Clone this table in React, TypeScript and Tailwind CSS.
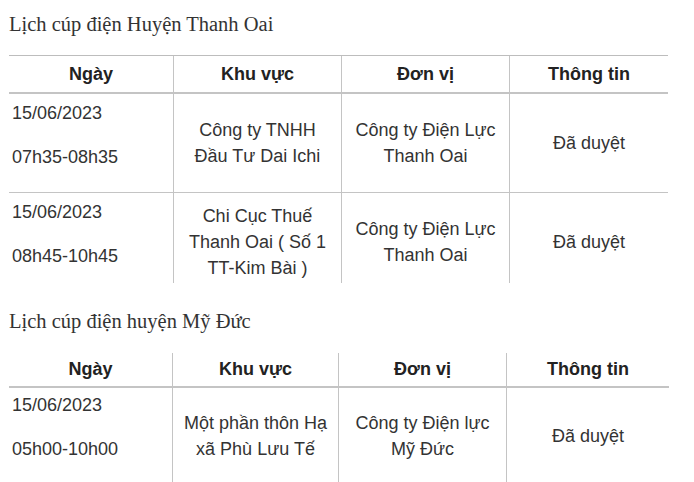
import React from "react";

type Row = {
  date: string;
  time: string;
  area: string[];
  unit: string[];
  info: string;
};

const thanhOai: Row[] = [
  {
    date: "15/06/2023",
    time: "07h35-08h35",
    area: ["Công ty TNHH", "Đầu Tư Dai Ichi"],
    unit: ["Công ty Điện Lực", "Thanh Oai"],
    info: "Đã duyệt",
  },
  {
    date: "15/06/2023",
    time: "08h45-10h45",
    area: ["Chi Cục Thuế", "Thanh Oai ( Số 1", "TT-Kim Bài )"],
    unit: ["Công ty Điện Lực", "Thanh Oai"],
    info: "Đã duyệt",
  },
];

const myDuc: Row[] = [
  {
    date: "15/06/2023",
    time: "05h00-10h00",
    area: ["Một phần thôn Hạ", "xã Phù Lưu Tế"],
    unit: ["Công ty Điện lực", "Mỹ Đức"],
    info: "Đã duyệt",
  },
];

const headers = ["Ngày", "Khu vực", "Đơn vị", "Thông tin"];

function Lines({ lines }: { lines: string[] }) {
  return (
    <div className="flex items-center justify-center text-center leading-[26px] border-l border-[#c4c4c4]">
      <div>
        {lines.map((l, i) => (
          <div key={i}>{l}</div>
        ))}
      </div>
    </div>
  );
}

function ScheduleTable({
  rows,
  cols,
  topBorder,
  headerH,
  rowH,
  datePad,
}: {
  rows: Row[];
  cols: string;
  topBorder: boolean;
  headerH: string;
  rowH: string;
  datePad: string;
}) {
  return (
    <div className={`grid ${cols} ${topBorder ? "border-t border-[#bdbdbd]" : ""}`}>
      {headers.map((h, i) => (
        <div
          key={h}
          className={`${headerH} flex items-center justify-center font-bold text-[#222] border-b-2 border-[#c4c4c4] ${
            i > 0 ? "border-l" : ""
          }`}
        >
          {h}
        </div>
      ))}
      {rows.map((r, idx) => (
        <React.Fragment key={idx}>
          <div className={`${rowH} ${datePad} pl-[3px] leading-[26px] border-b border-[#c4c4c4]`}>
            <p className="mb-[18px]">{r.date}</p>
            <p>{r.time}</p>
          </div>
          <div className={`${rowH} border-b border-[#c4c4c4] grid`}>
            <Lines lines={r.area} />
          </div>
          <div className={`${rowH} border-b border-[#c4c4c4] grid`}>
            <Lines lines={r.unit} />
          </div>
          <div className={`${rowH} border-b border-[#c4c4c4] grid`}>
            <Lines lines={[r.info]} />
          </div>
        </React.Fragment>
      ))}
    </div>
  );
}

export default function App() {
  return (
    <div className="min-h-screen w-[694px] bg-white text-[#333] font-['Liberation_Sans',Arial,sans-serif] text-[18px]">
      <div className="pl-[9px] pr-[26px]">
        <h2 className="pt-[10px] text-[20.5px] leading-[28px] font-normal font-['Liberation_Serif','Times_New_Roman',serif] text-[#333] mb-[17px]">
          Lịch cúp điện Huyện Thanh Oai
        </h2>

        <div className="h-[228px] overflow-hidden">
          <ScheduleTable
            rows={thanhOai}
            cols="grid-cols-[164px_168px_168px_159px]"
            topBorder
            headerH="h-[38px]"
            rowH="h-[99px]"
            datePad="pt-[6px]"
          />
        </div>

        <h2 className="mt-[24px] text-[20.5px] leading-[28px] font-normal font-['Liberation_Serif','Times_New_Roman',serif] text-[#333] mb-[18px]">
          Lịch cúp điện huyện Mỹ Đức
        </h2>

        <ScheduleTable
          rows={myDuc}
          cols="grid-cols-[163px_166px_168px_163px]"
          topBorder={false}
          headerH="h-[35px]"
          rowH="h-[97px]"
          datePad="pt-[4px]"
        />
      </div>
    </div>
  );
}
